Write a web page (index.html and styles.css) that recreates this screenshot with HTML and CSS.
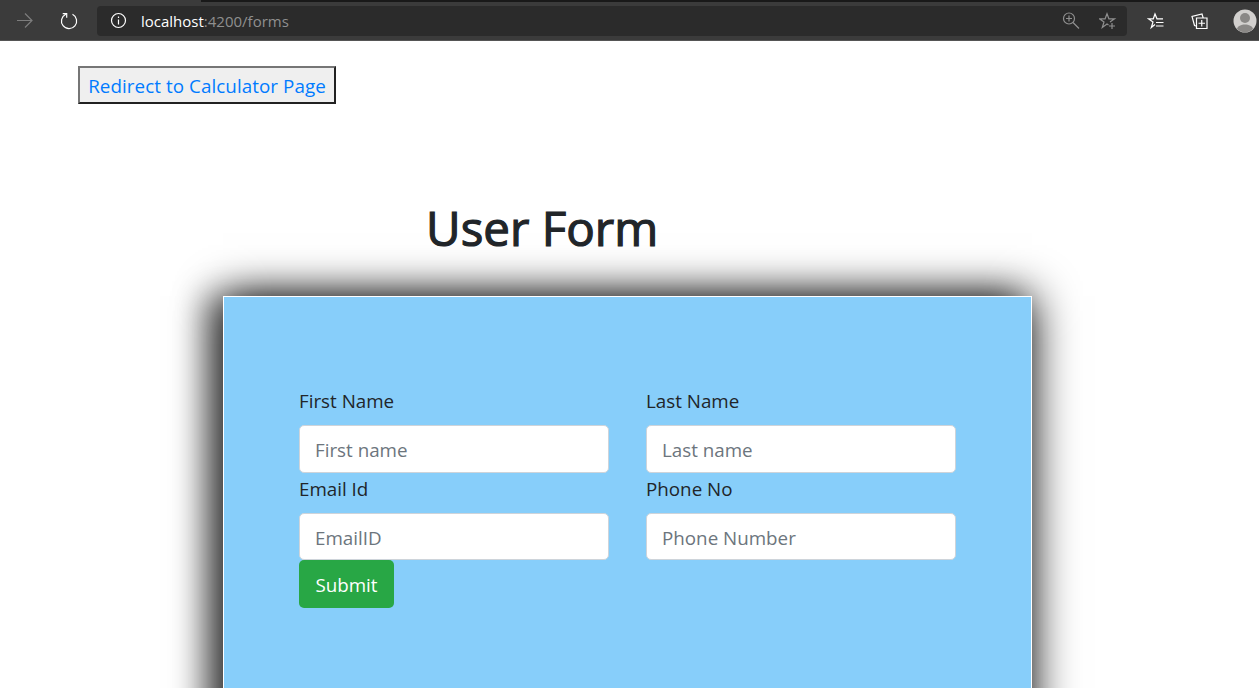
FILE: index.html
```html
<!DOCTYPE html>
<html lang="en">
<head>
<meta charset="utf-8">
<title>User Form</title>
<link rel="stylesheet" href="styles.css">
</head>
<body>
<header class="toolbar">
  <svg class="icon forward" viewBox="0 0 18 18"><path d="M1 8.500h15M9 1.500l7 7-7 7"/></svg>
  <svg class="icon reload" viewBox="0 0 18 18"><path d="M5.800 2.200A7.600 7.600 0 1 0 12.500 2.300M2.700 1.700h4v4"/></svg>
  <div class="address">
    <svg class="icon info" viewBox="0 0 16 16"><circle cx="8.500" cy="7.500" r="7"/><path d="M8.500 6.500v5M8.500 3.500v1.500"/></svg>
    <span class="url"><span class="host">localhost</span>:4200/forms</span>
    <svg class="icon magnify" viewBox="0 0 18 18"><circle cx="7" cy="6.500" r="5.500"/><path d="M11 10.500l6 6M4 6.500h6M7 3.500v6"/></svg>
    <svg class="icon star" viewBox="0 0 18 18"><path d="M9.500 13L8 12l-4.700 3.500L5 10 .500 6.800h5.600L8 1.800l1.900 5h5.600L11 10M13 11v6M10 14h6"/></svg>
  </div>
  <svg class="icon favorites" viewBox="0 0 18 18"><path d="M8 12.500L4.300 15.500 6 10 1.500 6.800h4.800L8 2l2 4.800h6M9 10.500h7.500M9 14h7.500"/></svg>
  <svg class="icon collections" viewBox="0 0 18 18"><path d="M5.500 6h10.500v10.500H5.500zM10.750 8v6.500M7.500 11.250H14M5 14L3.500 13.500 1 4.500 11 2l1.200 4"/></svg>
  <svg class="avatar" viewBox="0 0 24 24"><circle cx="12" cy="12" r="11.500" fill="#d2d0ce"/><circle cx="12" cy="9" r="5" fill="#8a8886"/><path d="M4 20c1-6 15-6 16 0a11.500 11.500 0 0 1-16 0z" fill="#8a8886"/></svg>
</header>
<main class="page">
  <button class="redirect"><a class="link">Redirect to Calculator Page</a></button>
  <h1 class="title">User Form</h1>
  <form class="card">
    <div class="grid">
      <label class="field"><span class="label">First Name</span><input class="input" placeholder="First name"></label>
      <label class="field"><span class="label">Last Name</span><input class="input" placeholder="Last name"></label>
      <label class="field"><span class="label">Email Id</span><input class="input short" placeholder="EmailID"></label>
      <label class="field"><span class="label">Phone No</span><input class="input short" placeholder="Phone Number"></label>
    </div>
    <button class="submit" type="button">Submit</button>
  </form>
</main>
</body>
</html>
```
FILE: styles.css
```css
* { box-sizing: border-box; }
body {
  margin: 0;
  height: 688px;
  overflow: hidden;
  background: #fff;
  color: #212529;
  font-family: "Open Sans", "Noto Sans", sans-serif;
  font-size: 18.8px;
}
.toolbar {
  display: flex;
  align-items: center;
  height: 41px;
  padding: 2px 0 1px 16px;
  background: linear-gradient(90deg, #3b3b3b 201px, #191919 201px) 0 0 / 100% 2px no-repeat, #3b3b3b;
  border-bottom: 1px solid #555;
}
.icon { width: 18px; height: 18px; flex: none; fill: none; stroke: #fff; stroke-width: 1.2; }
.forward { stroke: #7d7d7d; }
.reload { margin-left: 26px; }
.address {
  display: flex;
  align-items: center;
  width: 1030px;
  height: 30px;
  margin-left: 19px;
  padding: 0 10px 0 13px;
  border-radius: 4px;
  background: #2b2b2b;
}
.info { width: 16px; height: 16px; overflow: visible; }
.url { flex: 1; margin-left: 15px; color: #8f8f8f; font-size: 15px; }
.host { color: #fff; }
.magnify, .star { stroke: #8f8f8f; }
.star { margin-left: 19px; }
.favorites { margin-left: 20px; }
.collections { margin-left: 26px; }
.avatar { width: 24px; height: 24px; flex: none; margin-left: 24px; }
.page { height: 647px; padding: 25px 0 0 78px; overflow: hidden; }
.redirect {
  display: block;
  width: 258px;
  height: 38px;
  padding: 1px 0 0;
  border: 2px solid;
  border-color: #767676 #212121 #212121 #767676;
  background: #efefef;
  font: inherit;
  letter-spacing: .07px;
}
.link { color: #007bff; }
.title {
  width: 232px;
  margin: 94px 0 0 348px;
  font-size: 47.500px;
  line-height: 60px;
  font-weight: 500;
  white-space: nowrap;
  -webkit-text-stroke: 1.2px #212529;
}
.card {
  width: 809px;
  height: 460px;
  margin: 38px 0 0 145px;
  padding: 88px 75px 0;
  border: 1px solid #fff;
  background: #87cefa;
  box-shadow: 0 0 42px #000, -20px 0 30px rgba(0, 0, 0, .38);
}
.grid { display: grid; grid-template-columns: 310px 310px; column-gap: 37px; }
.field { display: block; }
.label { display: block; height: 30px; margin: 0 0 10px; line-height: 32px; }
.input {
  display: block;
  width: 310px;
  height: 48px;
  padding: 2px 15px 0;
  border: 1px solid #ced4da;
  border-radius: 5px;
  background: #fff;
  font: inherit;
}
.short { height: 47px; }
.input::placeholder { color: #6c757d; opacity: 1; }
.submit {
  display: block;
  width: 95px;
  height: 48px;
  padding: 2px 0 0;
  border: 0;
  border-radius: 5px;
  background: #28a745;
  color: #fff;
  font: inherit;
}
```
